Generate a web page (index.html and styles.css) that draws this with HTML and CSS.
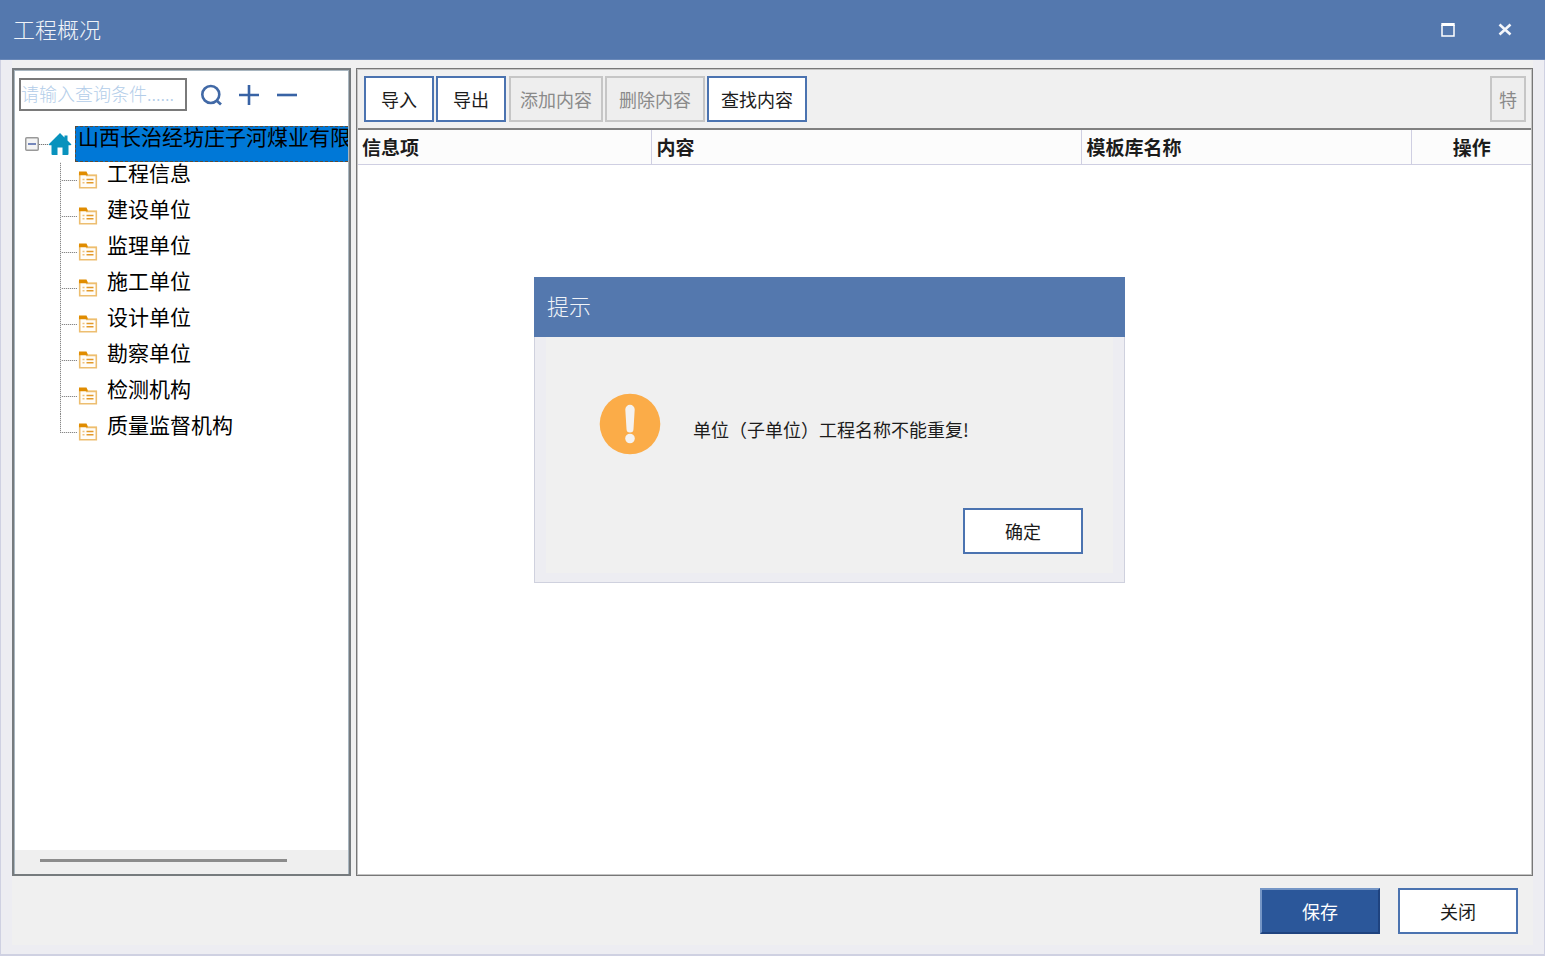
FILE: index.html
```html
<!DOCTYPE html>
<html lang="zh-CN">
<head>
<meta charset="utf-8">
<title>工程概况</title>
<link rel="stylesheet" href="styles.css">
</head>
<body>
<svg class="sprite" aria-hidden="true">
  <symbol id="folder" viewBox="0 0 20 20">
    <path d="M1 2h7l2 2h9v3H1z" fill="#f7dfb4"/>
    <path d="M1.700 3v14.800h16.600V5.500H8" fill="#fffdf9" stroke="#edbe70" stroke-width="1.600"/>
    <path d="M1 1.500h7.500l1.500 3.700H1z" fill="#e08c00"/>
    <path d="M8.500 9.500h7M8.500 12.800h7" stroke="#e39a2a" stroke-width="1.500"/>
    <path d="M4.500 9.500h2M4.500 12.800h2" stroke="#efc27c" stroke-width="1.500"/>
  </symbol>
</svg>
<div class="window">
  <header class="titlebar">
    <h1 class="title">工程概况</h1>
    <button class="caption-button" type="button" aria-label="最大化">
      <svg width="14" height="14" viewBox="0 0 14 14"><path d="M1 2v11h12V2" fill="none" stroke="#fff" stroke-width="1.500"/><path d="M0.300 1.500h13.400" stroke="#fff" stroke-width="3"/></svg>
    </button>
    <button class="caption-button" type="button" aria-label="关闭窗口">
      <svg width="14" height="14" viewBox="0 0 14 14"><path d="M1.500 1.500l11 10M12.500 1.500l-11 10" stroke="#f4f6fa" stroke-width="2.600"/></svg>
    </button>
  </header>
  <div class="frame">
    <main class="content">
      <section class="side">
        <div class="search">
          <input class="search-input" type="text" placeholder="请输入查询条件......" aria-label="查询条件">
          <div class="tools">
            <button class="tool" type="button" aria-label="查询">
              <svg width="22" height="22" viewBox="0 0 22 22"><circle cx="10.800" cy="10.500" r="8.500" fill="none" stroke="#4169a6" stroke-width="2.600"/><path d="M16 16l5 4.500" stroke="#4169a6" stroke-width="2.800"/></svg>
            </button>
            <button class="tool" type="button" aria-label="添加">
              <svg width="22" height="22" viewBox="0 0 22 22"><path d="M1 11h20M11 1v20" stroke="#3863a5" stroke-width="2.600"/></svg>
            </button>
            <button class="tool" type="button" aria-label="删除">
              <svg width="22" height="22" viewBox="0 0 22 22"><path d="M1 11h20" stroke="#3863a5" stroke-width="2.600"/></svg>
            </button>
          </div>
        </div>
        <div class="tree">
          <div class="root">
            <button class="toggle" type="button" aria-label="折叠"><svg width="14" height="14" viewBox="0 0 14 14"><rect x="0.750" y="0.750" width="12.500" height="12.500" rx="1" fill="#f4f4f4" stroke="#999" stroke-width="1.500"/><path d="M3 7h8" stroke="#4b63a7" stroke-width="1.500"/></svg></button>
            <span class="stub"></span>
            <svg class="home" width="24" height="24" viewBox="0 0 24 24"><path d="M12 1l4.500 4.400V3.500h3v5L23.500 12.500l-1 .8H20.500V22q0 1-1 1h-5v-7.500h-5V23h-5q-1 0-1-1v-8.700H1.500l-1-.8z" fill="#0892bd"/></svg>
            <span class="root-name">山西长治经坊庄子河煤业有限</span>
          </div>
          <ul class="nodes">
            <li class="node"><span class="branch"></span><svg class="folder"><use href="#folder"/></svg><span class="name">工程信息</span></li>
            <li class="node"><span class="branch"></span><svg class="folder"><use href="#folder"/></svg><span class="name">建设单位</span></li>
            <li class="node"><span class="branch"></span><svg class="folder"><use href="#folder"/></svg><span class="name">监理单位</span></li>
            <li class="node"><span class="branch"></span><svg class="folder"><use href="#folder"/></svg><span class="name">施工单位</span></li>
            <li class="node"><span class="branch"></span><svg class="folder"><use href="#folder"/></svg><span class="name">设计单位</span></li>
            <li class="node"><span class="branch"></span><svg class="folder"><use href="#folder"/></svg><span class="name">勘察单位</span></li>
            <li class="node"><span class="branch"></span><svg class="folder"><use href="#folder"/></svg><span class="name">检测机构</span></li>
            <li class="node"><span class="branch"></span><svg class="folder"><use href="#folder"/></svg><span class="name">质量监督机构</span></li>
          </ul>
        </div>
        <div class="scrollbar"><div class="thumb"></div></div>
      </section>
      <section class="detail">
        <div class="toolbar">
          <button class="button" type="button">导入</button>
          <button class="button" type="button">导出</button>
          <button class="button tight" type="button" disabled>添加内容</button>
          <button class="button medium" type="button" disabled>删除内容</button>
          <button class="button medium" type="button">查找内容</button>
          <button class="button single" type="button" disabled>特</button>
        </div>
        <table class="grid">
          <thead>
            <tr><th class="col-item">信息项</th><th>内容</th><th class="col-library">模板库名称</th><th class="col-action">操作</th></tr>
          </thead>
        </table>
      </section>
    </main>
    <footer class="actions">
      <button class="button wide primary" type="button">保存</button>
      <button class="button wide" type="button">关闭</button>
    </footer>
  </div>
</div>
<dialog class="dialog" open aria-labelledby="dialog-title">
  <h2 class="dialog-title" id="dialog-title">提示</h2>
  <div class="dialog-frame">
    <div class="dialog-body">
      <div class="message">
        <svg width="62" height="62" viewBox="0 0 62 62" aria-hidden="true"><circle cx="31" cy="31" r="30.300" fill="#fbac48"/><path d="M26.300 16.500a4.700 4.700 0 0 1 9.400 0l-1.200 19.500a3.500 3.500 0 0 1-7 0z" fill="#f4f2f0"/><circle cx="31" cy="45.500" r="4.800" fill="#f4f2f0"/></svg>
        <p class="message-text">单位（子单位）工程名称不能重复!</p>
      </div>
      <button class="button wide confirm" type="button">确定</button>
    </div>
  </div>
</dialog>
</body>
</html>
```

FILE: styles.css
```css
* {
  box-sizing: border-box;
}

body {
  margin: 0;
  font-family: "Noto Sans CJK SC", sans-serif;
  font-size: 18px;
  color: #1c1c1c;
}

button,
input {
  font: inherit;
  color: inherit;
}

.sprite {
  position: absolute;
  width: 0;
  height: 0;
}

.window {
  display: flex;
  flex-direction: column;
  min-height: 100vh;
}

.titlebar {
  display: flex;
  align-items: center;
  height: 60px;
  padding: 0 12px 0 13px;
  background: #5478ae;
  border-bottom: 1px solid #6a89b9;
}

.title {
  flex: 1;
  margin: 0;
  padding-bottom: 3px;
  font-size: 22px;
  font-weight: 300;
  color: #f0f3f8;
}

.caption-button {
  display: flex;
  justify-content: center;
  width: 57px;
  padding: 8px 0;
  border: 0;
  background: none;
}

.frame {
  flex: 1;
  display: flex;
  flex-direction: column;
  padding: 0 11px 9px;
  border: solid #cfd1e2;
  border-width: 0 1px 2px;
  background: #ededf2;
}

.content {
  flex: 1;
  display: flex;
  gap: 5px;
  padding-top: 8px;
  background: #f0f0f0;
}

.side {
  display: flex;
  flex-direction: column;
  width: 339px;
  border: 2px solid #767b7e;
  box-shadow: inset 0 0 0 1px #a9b6c0;
  background: #fff;
}

.search {
  display: flex;
  align-items: center;
  padding: 8px 5px 0;
}

.search-input {
  width: 168px;
  height: 33px;
  padding: 0 0 4px;
  border: 2px solid #7a7a7a;
  background: #fff;
  font-weight: 300;
}

.search-input::placeholder {
  color: #b3cde9;
  opacity: 1;
}

.tools {
  display: flex;
  gap: 16px;
  margin-left: 13px;
}

.tool {
  display: flex;
  padding: 0;
  border: 0;
  background: none;
}

.tree {
  flex: 1;
  padding-top: 15px;
  font-size: 21px;
  color: #000;
}

.root {
  display: flex;
  align-items: center;
  height: 36px;
  padding: 0 1px 0 11px;
}

.toggle {
  display: flex;
  padding: 0;
  border: 0;
  background: none;
}

.stub {
  width: 9px;
  height: 1px;
  background: repeating-linear-gradient(90deg, #777 0 1px, #ddd 1px 2px);
}

.home {
  flex: none;
}

.root-name {
  flex: 1;
  min-width: 0;
  height: 36px;
  margin-left: 3px;
  padding-left: 2px;
  border: 1px dashed #5c4a38;
  border-right: 0;
  overflow: hidden;
  white-space: nowrap;
  line-height: 18px;
  background: #0078d7;
}

.nodes {
  margin: 0;
  padding: 0 0 0 46px;
  list-style: none;
}

.node {
  display: flex;
  height: 36px;
}

.branch {
  width: 17px;
  height: 36px;
  background:
    repeating-linear-gradient(0deg, #888 0 1px, #e4e4e4 1px 2px) 0 0 / 1px 100% no-repeat,
    repeating-linear-gradient(90deg, #888 0 1px, #e4e4e4 1px 2px) 0 18px / 100% 1px no-repeat;
}

.node:last-child .branch {
  height: 19px;
}

.folder {
  width: 20px;
  height: 20px;
  margin: 8px 9px 0 1px;
}

.name {
  line-height: 20px;
}

.scrollbar {
  height: 24px;
  margin: 0 1px;
  padding: 9px 61px 0 25px;
  background: #efefef;
}

.thumb {
  height: 3px;
  background: #8c8c8c;
}

.detail {
  flex: 1;
  min-width: 0;
  border: 1px solid #777;
  outline: 1px solid #c4c4c4;
  outline-offset: -2px;
  background: #fff;
}

.toolbar {
  display: flex;
  gap: 2px;
  padding: 7px 6px 6px 7px;
  border-bottom: 2px solid #808080;
  background: #f0f0f0;
}

.button {
  height: 46px;
  padding: 0 15px;
  border: 2px solid #4b73b0;
  background: #fff;
  white-space: nowrap;
}

.button:disabled {
  border-color: #c6c6c6;
  background: #eee;
  color: #8a8a8a;
}

.tight {
  margin-left: 1px;
  padding-inline: 9px;
}

.medium {
  padding-inline: 12px;
}

.single {
  margin-left: auto;
  padding-inline: 7px;
}

.wide {
  width: 120px;
}

.primary {
  border-color: #7596c6 #1f437f #1f437f #7596c6;
  background: #2b579a;
  color: #fff;
}

.grid {
  width: 100%;
  border-collapse: collapse;
  table-layout: fixed;
}

.grid th {
  height: 34px;
  padding: 0 5px;
  border-right: 1px solid #cfcfe2;
  border-bottom: 1px solid #cfcfe2;
  background: #fcfcfc;
  font-size: 19px;
  line-height: 32px;
  text-align: left;
}

.grid .col-item {
  width: 294px;
}

.grid .col-library {
  width: 330px;
}

.grid .col-action {
  width: 121px;
  border-right: 0;
  text-align: center;
}

.actions {
  display: flex;
  justify-content: flex-end;
  gap: 18px;
  padding: 12px 15px 11px;
  background: #f0f0f0;
}

.dialog {
  position: absolute;
  top: 277px;
  left: 534px;
  width: 591px;
  margin: 0;
  padding: 0;
  border: 0;
  color: inherit;
}

.dialog-title {
  height: 60px;
  margin: 0;
  padding-left: 13px;
  background: #5478ae;
  font-size: 22px;
  font-weight: 300;
  line-height: 57px;
  color: #f0f3f8;
}

.dialog-frame {
  padding: 0 11px 9px;
  border: solid #cfd1de;
  border-width: 0 1px 1px;
  background: #ededf2;
}

.dialog-body {
  display: flex;
  flex-direction: column;
  padding: 56px 30px 19px 53px;
  background: #f0f0f0;
}

.message {
  display: flex;
  align-items: center;
  gap: 32px;
}

.message-text {
  margin: 10px 0 0;
}

.confirm {
  align-self: flex-end;
  margin-top: 53px;
}
```
